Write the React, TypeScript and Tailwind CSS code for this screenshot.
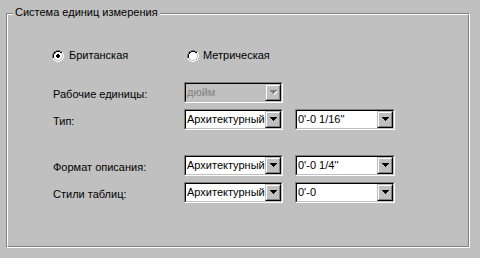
import React from "react";

const FONT = { fontFamily: '"Liberation Sans", Arial, sans-serif' };

function Radio({ checked }: { checked?: boolean }) {
  return (
    <svg width="12" height="12" viewBox="0 0 12 12" className="shrink-0" shapeRendering="crispEdges">
      {/* outer ring: top-left gray, bottom-right white */}
      <path d="M4 0h4v1H4zM2 1h2v1H2zM8 1h2v1H8zM1 2h1v2H1zM0 4h1v4H0zM1 8h1v0H1z" fill="#808080" />
      <path d="M10 2h1v2h-1zM11 4h1v4h-1zM10 8h1v2h-1zM8 10h2v1H8zM2 10h2v1H2zM4 11h4v1H4zM1 8h1v2H1z" fill="#ffffff" />
      {/* inner ring: top-left black, bottom-right light */}
      <path d="M4 1h4v1H4zM2 2h2v1H2zM8 2h2v1H8zM1 4h1v4H1zM2 3h1v1H2z" fill="#000000" />
      <path d="M9 3h1v1H9zM10 4h1v4h-1zM9 8h1v1H9zM8 9h2v1H8zM2 9h2v1H2zM4 10h4v1H4zM2 8h1v1H2z" fill="#c0c0c0" />
      {/* interior */}
      <path d="M4 2h4v1H4zM3 3h6v1H3zM2 4h8v4H2zM3 8h6v1H3zM4 9h4v1H4z" fill="#ffffff" />
      {checked && <path d="M5 4h2v1H5zM4 5h4v2H4zM5 7h2v1H5z" fill="#000000" />}
    </svg>
  );
}

function Arrow({ disabled }: { disabled?: boolean }) {
  return (
    <svg width="7" height="5" viewBox="0 0 7 5" shapeRendering="crispEdges">
      {disabled && <path d="M1 1h7v1H1zM2 2h5v1H2zM3 3h3v1H3zM4 4h1v1H4z" fill="#ffffff" />}
      <path d="M0 0h7v1H0zM1 1h5v1H1zM2 2h3v1H2zM3 3h1v1H3z" fill={disabled ? "#808080" : "#000000"} />
    </svg>
  );
}

function Combo({ value, width, disabled }: { value: string; width: string; disabled?: boolean }) {
  return (
    <div
      className={`${width} h-[21px] shrink-0 border border-t-[#808080] border-l-[#808080] border-b-white border-r-white`}
    >
      <div className="h-full border border-t-black border-l-black border-b-[#c0c0c0] border-r-[#c0c0c0] flex">
        <div
          className={`flex-1 min-w-0 overflow-hidden whitespace-nowrap pl-[1px] text-[11px] leading-[17px] ${
            disabled ? "bg-[#c0c0c0] text-[#808080]" : "bg-white text-black"
          }`}
        >
          {value}
        </div>
        <div className="w-[16px] h-[17px] shrink-0 border border-t-[#c0c0c0] border-l-[#c0c0c0] border-b-black border-r-black">
          <div className="w-full h-full bg-[#c0c0c0] border border-t-white border-l-white border-b-[#808080] border-r-[#808080] flex items-center justify-center">
            <Arrow disabled={disabled} />
          </div>
        </div>
      </div>
    </div>
  );
}

function Row({ label, children, className }: { label: string; children: React.ReactNode; className?: string }) {
  return (
    <div className={`flex items-start ${className ?? ""}`}>
      <div className="w-[132px] shrink-0 mt-[6px] text-[11px] leading-[13px] pl-[1px]">{label}</div>
      <div className="flex gap-[12px]">{children}</div>
    </div>
  );
}

export default function App() {
  return (
    <div className="w-[480px] h-[258px] bg-[#c0c0c0] text-black overflow-hidden" style={FONT}>
      <div className="pt-[13px] pl-[6px]">
        <div className="relative w-[464px] h-[235px] border border-t-[#808080] border-l-[#808080] border-b-white border-r-white">
          <div className="h-full border border-t-white border-l-white border-b-[#808080] border-r-[#808080] pl-[44px] pt-[34px]">
            <div className="flex items-center">
              <div className="w-[135px] flex items-center gap-[5px]">
                <Radio checked />
                <span className="text-[11px] leading-[13px]">Британская</span>
              </div>
              <div className="flex items-center gap-[4px]">
                <Radio />
                <span className="text-[11px] leading-[13px]">Метрическая</span>
              </div>
            </div>
            <Row label="Рабочие единицы:" className="mt-[20px]">
              <Combo value="дюйм" width="w-[99px]" disabled />
            </Row>
            <Row label="Тип:" className="mt-[6px]">
              <Combo value="Архитектурный" width="w-[99px]" />
              <Combo value={"0'-0 1/16''"} width="w-[100px]" />
            </Row>
            <Row label="Формат описания:" className="mt-[25px]">
              <Combo value="Архитектурный" width="w-[99px]" />
              <Combo value={"0'-0 1/4''"} width="w-[100px]" />
            </Row>
            <Row label="Стили таблиц:" className="mt-[6px]">
              <Combo value="Архитектурный" width="w-[99px]" />
              <Combo value={"0'-0"} width="w-[100px]" />
            </Row>
          </div>
          <div className="absolute left-[6px] top-[-8px] px-[2px] bg-[#c0c0c0] text-[11px] leading-[13px]">
            Система единиц измерения
          </div>
        </div>
      </div>
    </div>
  );
}
